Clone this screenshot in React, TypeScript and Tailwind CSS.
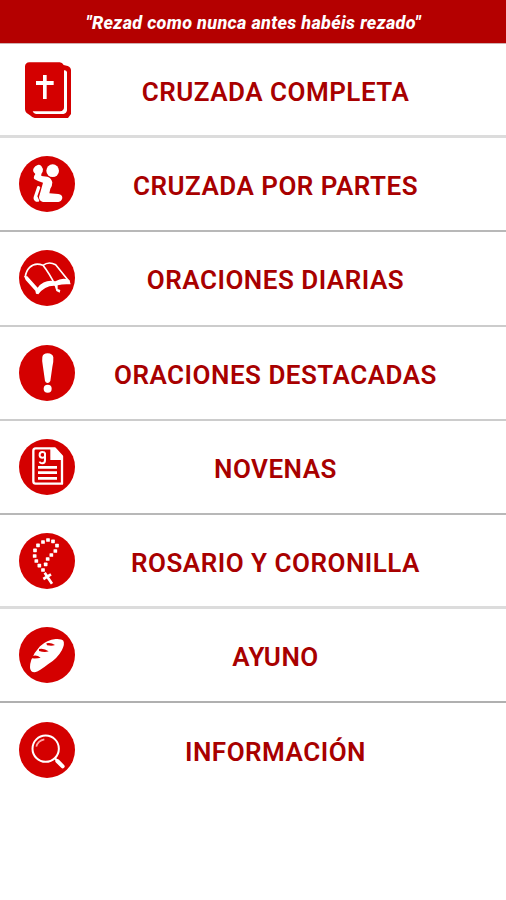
import type { ReactNode } from "react"

function Disc({ children }: { children: ReactNode }) {
  return (
    <svg viewBox="27 30 168 168" className="size-14 shrink-0" fill="#fff" aria-hidden="true">
      <circle cx="111" cy="114" r="84" fill="#d40000" />
      {children}
    </svg>
  )
}

function BibleIcon() {
  return (
    <svg viewBox="27 36 168 168" className="size-14 shrink-0" aria-hidden="true">
      <path
        d="M58 37H149Q157 37 161 45L173 48Q183 52 183 61V192L174 204H74Q66 203 60 196L50 189Q45 184 45 178V49Q46 38 58 37Z"
        fill="#d40000"
      />
      <path d="M162 61Q169 60 171 66V181Q170 190 160 192H78Q70 191 68 184H150Q162 183 162 172Z" fill="#fff" />
      <path d="M99 75H110V93H131V105H110V147H99V105H78V93H99Z" fill="#fff" />
    </svg>
  )
}

function KneelingIcon() {
  return (
    <Disc>
      <circle cx="128" cy="74" r="19" />
      <path d="M83 57Q88 54 94 60Q101 68 98 77Q92 84 94 90L112 92Q124 96 127 109Q127 120 121 128L118 142L145 144Q157 146 157 156Q155 167 145 168H99Q87 165 87 153L99 110Q82 106 74 100Q68 96 76 84Q66 76 71 67Q75 60 83 57Z" />
      <path d="M82 121Q89 118 91 125L82 151L88 164Q86 169 78 167Q69 163 71 153Z" />
    </Disc>
  )
}

function OpenBookIcon() {
  return (
    <Disc>
      <path
        d="M46 110Q48 93 59 82Q75 66 99 76Q116 63 137 74L178 125M99 76Q117 99 136 136"
        fill="none"
        stroke="#fff"
        strokeWidth="5"
        strokeLinejoin="round"
      />
      <path d="M42 108L52 109L83 143Q103 117 136 124Q157 111 178 120L182 133Q160 131 143 136L143 147L151 150L149 158L139 153L134 137Q104 136 85 163L78 161L76 152L47 120Z" />
    </Disc>
  )
}

function ExclamationIcon() {
  return (
    <Disc>
      <path d="M97 66Q99 55 113 55Q128 56 130 67Q131 79 127 96L121 138Q118 144 113 144Q107 144 105 138L99 96Q95 77 97 66Z" />
      <circle cx="113" cy="161" r="12" />
    </Disc>
  )
}

function NovenaIcon() {
  return (
    <Disc>
      <path
        d="M77 58H134L156 82V164H77Q70 164 70 157V65Q70 58 77 58Z"
        fill="none"
        stroke="#fff"
        strokeWidth="7"
        strokeLinejoin="round"
      />
      <path d="M121 58H134L157 82V93H121Z" />
      <path d="M84 115H141M84 131H141M84 148H141" stroke="#fff" strokeWidth="8" />
      <path
        d="M105 73Q104 69 97 69Q89 69 89 77V80Q90 86 97 86Q103 86 105 82ZM105 73V93Q105 103 97 103Q90 103 89 98"
        fill="none"
        stroke="#fff"
        strokeWidth="6"
      />
    </Disc>
  )
}

const beads = [
  [99, 57], [114, 51], [129, 55], [141, 68], [136, 84], [124, 96], [113, 108], [107, 124],
  [84, 67], [75, 82], [74, 99], [79, 114], [88, 128], [99, 141],
]

function RosaryIcon() {
  return (
    <Disc>
      {beads.map(([x, y]) => (
        <rect key={`${x}-${y}`} x={x - 5.5} y={y - 5.5} width="11" height="11" rx="2" />
      ))}
      <path d="M104 149L126 182M100 168L123 154" stroke="#fff" strokeWidth="8" />
    </Disc>
  )
}

function BreadIcon() {
  return (
    <Disc>
      <path d="M64 128Q73 106 90 88Q111 68 137 66Q155 65 160 71Q165 80 156 99Q142 125 114 142Q88 163 74 166Q60 166 60 151Q60 139 64 128Z" />
      <path
        d="M66 118Q79 112 92 122Q82 125 66 124ZM87 96Q101 92 116 103Q104 107 87 102ZM109 79Q122 75 135 84Q127 88 111 85Z"
        fill="#d40000"
      />
    </Disc>
  )
}

function MagnifierIcon() {
  return (
    <Disc>
      <circle cx="107" cy="110" r="39.5" fill="none" stroke="#fff" strokeWidth="6" />
      <path d="M79 104Q83 86 103 82" fill="none" stroke="#ffaaaa" strokeWidth="5" />
      <path d="M134 138L143 147" stroke="#fff" strokeWidth="6" />
      <path d="M142 147L158 163" stroke="#fff" strokeWidth="12" strokeLinecap="round" />
    </Disc>
  )
}

const menu = [
  { label: "CRUZADA COMPLETA", icon: <BibleIcon />, line: "border-b-[3px] border-[#dcdcdc]" },
  { label: "CRUZADA POR PARTES", icon: <KneelingIcon />, line: "border-b-2 border-[#b8b8b8]" },
  { label: "ORACIONES DIARIAS", icon: <OpenBookIcon />, line: "border-b-2 border-[#cccccc]" },
  { label: "ORACIONES DESTACADAS", icon: <ExclamationIcon />, line: "border-b-2 border-[#cccccc]" },
  { label: "NOVENAS", icon: <NovenaIcon />, line: "border-b-2 border-[#b8b8b8]" },
  { label: "ROSARIO Y CORONILLA", icon: <RosaryIcon />, line: "border-b-[3px] border-[#dcdcdc]" },
  { label: "AYUNO", icon: <BreadIcon />, line: "border-b-2 border-[#b0b0b0]" },
  { label: "INFORMACIÓN", icon: <MagnifierIcon />, line: "" },
]

export default function App() {
  return (
    <div className="flex h-[900px] w-[506px] flex-col bg-white font-['Roboto',sans-serif]">
      <header className="flex h-11 shrink-0 items-center justify-center border-b border-[#d0b0b0] bg-[#b40000]">
        <h1 className="pt-px pl-px text-[18px] font-extrabold tracking-[0.33px] whitespace-nowrap text-white italic">
          "Rezad como nunca antes habéis rezado"
        </h1>
      </header>
      <nav className="flex flex-col">
        {menu.map((item) => (
          <a key={item.label} className={`flex h-[94.2px] items-center pl-[19px] ${item.line}`}>
            {item.icon}
            <span className="flex-1 pt-[5px] pr-[30px] text-center text-[26px] font-semibold tracking-[0.5px] whitespace-nowrap text-[#a80000]">
              {item.label}
            </span>
          </a>
        ))}
      </nav>
    </div>
  )
}
